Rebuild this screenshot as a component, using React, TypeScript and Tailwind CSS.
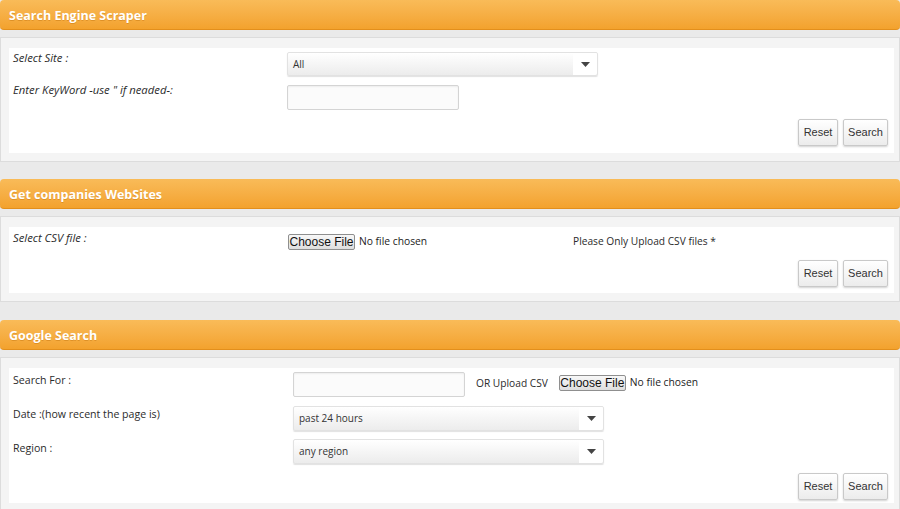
import { ReactNode } from "react";

const font = "font-['Open_Sans',sans-serif]";

function Header({ title }: { title: string }) {
  return (
    <div className="h-[30px] rounded-[4px] border-b border-[#e38f1c] bg-gradient-to-b from-[#f9bb58] to-[#f3a22d] pl-[9px] pt-[4px] flex items-center">
      <span className="text-[12.5px] font-bold text-white [text-shadow:0_1px_0_rgba(180,100,0,0.35)]">{title}</span>
    </div>
  );
}

function Box({ children }: { children: ReactNode }) {
  return (
    <div className="mt-[7px] border border-[#dcdcdc] bg-[#f4f4f4] pt-[10px] pb-[8px] pl-[8px] pr-[5px]">
      <div className="bg-white">{children}</div>
    </div>
  );
}

function Select({ value, w, h }: { value: string; w: string; h: string }) {
  return (
    <div className={`${w} ${h} flex items-center rounded-[2px] border border-[#e2e2e2] bg-gradient-to-b from-[#ffffff] to-[#ececec] shadow-[0_1px_1px_rgba(0,0,0,0.12)]`}>
      <span className="flex-1 pl-[5px] text-[10px] text-[#333]">{value}</span>
      <div className="w-[24px] h-full bg-white flex items-center justify-center rounded-r-[2px]">
        <svg width="9" height="5" viewBox="0 0 9 5"><path d="M0 0h9L4.5 5z" fill="#444" /></svg>
      </div>
    </div>
  );
}

function TextInput() {
  return <div className="w-[172px] h-[25px] rounded-[2px] border border-[#d4d4d4] bg-[#fbfbfb] shadow-[inset_0_1px_2px_rgba(0,0,0,0.06)]" />;
}

function ChooseFile() {
  return (
    <div className="flex items-center">
      <div className="h-[16px] w-[67px] rounded-[2px] border border-[#8f8f8f] bg-gradient-to-b from-[#f8f8f8] to-[#dedede] flex items-center justify-center font-['Liberation_Sans',sans-serif] text-[12px] text-[#111]">
        Choose File
      </div>
      <span className="ml-[4px] text-[10.3px] text-[#222]">No file chosen</span>
    </div>
  );
}

function Buttons({ mt }: { mt: string }) {
  const btn =
    "h-[27px] rounded-[2px] border border-[#c9c9c9] bg-gradient-to-b from-[#ffffff] to-[#ececec] shadow-[0_1px_2px_rgba(0,0,0,0.18)] font-['Liberation_Sans',sans-serif] text-[11px] text-[#333] flex items-center justify-center";
  return (
    <div className={`${mt} flex justify-end gap-[5px] pr-[6px]`}>
      <div className={`${btn} w-[40px]`}>Reset</div>
      <div className={`${btn} w-[45px]`}>Search</div>
    </div>
  );
}

export default function App() {
  return (
    <div className={`${font} w-[900px] h-[509px] overflow-hidden bg-[#eaeaea]`}>
      <Header title="Search Engine Scraper" />
      <Box>
        <div className="pt-[2px] pb-[7px] text-[11.3px] text-[#2b2b2b]">
          <div className="flex items-start">
            <div className="w-[278px] pl-[4px] italic leading-[15px]">Select Site :</div>
            <div className="mt-[2px]"><Select value="All" w="w-[311px]" h="h-[24px]" /></div>
          </div>
          <div className="flex items-start">
            <div className="w-[278px] pl-[4px] italic leading-[15px] mt-[6px]">Enter KeyWord -use " if neaded-:</div>
            <div className="mt-[9px]"><TextInput /></div>
          </div>
          <Buttons mt="mt-[9px]" />
        </div>
      </Box>

      <div className="mt-[17px]">
        <Header title="Get companies WebSites" />
        <Box>
          <div className="pt-[3px] pb-[6px] text-[11.3px] text-[#2b2b2b]">
            <div className="flex items-start">
              <div className="w-[279px] pl-[4px] italic leading-[15px]">Select CSV file :</div>
              <div className="mt-[4px] w-[285px]"><ChooseFile /></div>
              <div className="mt-[4px] leading-[15px] text-[10.2px]">Please Only Upload CSV files *</div>
            </div>
            <Buttons mt="mt-[10px]" />
          </div>
        </Box>
      </div>

      <div className="mt-[18px]">
        <Header title="Google Search" />
        <Box>
          <div className="pt-[4px] pb-[3px] text-[10.6px] text-[#2b2b2b]">
            <div className="flex items-start">
              <div className="w-[284px] pl-[4px] leading-[15px] mt-[1px]">Search For :</div>
              <TextInput />
              <div className="ml-[11px] mt-[4px] leading-[15px] text-[10.2px]">OR Upload CSV</div>
              <div className="ml-[11px] mt-[3px]"><ChooseFile /></div>
            </div>
            <div className="flex items-start mt-[9px]">
              <div className="w-[284px] pl-[4px] leading-[15px] mt-[1px]">Date :(how recent the page is)</div>
              <Select value="past 24 hours" w="w-[311px]" h="h-[25px]" />
            </div>
            <div className="flex items-start mt-[8px]">
              <div className="w-[284px] pl-[4px] leading-[15px] mt-[2px]">Region :</div>
              <Select value="any region" w="w-[311px]" h="h-[25px]" />
            </div>
            <Buttons mt="mt-[9px]" />
          </div>
        </Box>
      </div>
    </div>
  );
}
